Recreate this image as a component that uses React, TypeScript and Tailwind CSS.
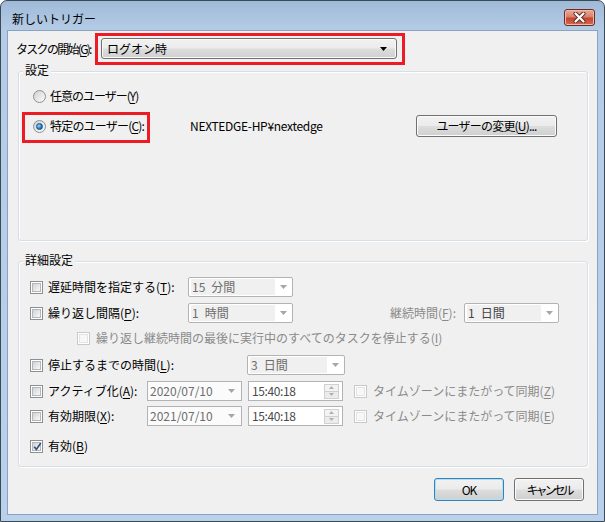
import React from "react";

const BTN_BG =
  "bg-[linear-gradient(to_bottom,#f2f2f2_0%,#ebebeb_48%,#dddddd_52%,#cfcfcf_100%)]";
const GRAY = "text-[#8a8a8a]";

function Key({ children }: { children: React.ReactNode }) {
  return <span className="underline decoration-1 underline-offset-2">{children}</span>;
}

function Arrow({ color = "#000", w = 7, h = 4 }: { color?: string; w?: number; h?: number }) {
  return (
    <svg width={w} height={h} viewBox={`0 0 ${w} ${h}`} aria-hidden>
      <polygon points={`0,0 ${w},0 ${w / 2},${h}`} fill={color} />
    </svg>
  );
}

function CheckBox({ checked = false, disabled = false }: { checked?: boolean; disabled?: boolean }) {
  return (
    <span
      className={`relative flex h-[13px] w-[13px] shrink-0 items-center justify-center border bg-white ${
        disabled ? "border-[#c9c9c9]" : "border-[#8e8f8f]"
      }`}
    >
      <span
        className={`h-[9px] w-[9px] border ${
          disabled
            ? "border-[#e4e4e4] bg-[#f7f7f7]"
            : "border-[#b3b7bc] bg-[linear-gradient(135deg,#cfd2d6,#f9f9f9)]"
        }`}
      />
      {checked && (
        <svg className="absolute left-[1px] top-[0px]" width="11" height="11" viewBox="0 0 11 11" aria-hidden>
          <path d="M2.2 5.8 L4.4 8.4 L8.8 2" fill="none" stroke="#3a4f83" strokeWidth="1.7" />
        </svg>
      )}
    </span>
  );
}

function Radio({ checked = false }: { checked?: boolean }) {
  return (
    <span className="flex h-[13px] w-[13px] shrink-0 items-center justify-center rounded-full border border-[#8e8f8f] bg-[linear-gradient(135deg,#cdd0d4,#fdfdfd)]">
      {checked && (
        <span className="h-[7px] w-[7px] rounded-full border border-[#1d4d84] bg-[radial-gradient(circle_at_35%_35%,#9ad6ff,#2b80cf_55%,#0d3e78)]" />
      )}
    </span>
  );
}

function PushButton({
  children,
  className = "",
  isDefault = false,
}: {
  children: React.ReactNode;
  className?: string;
  isDefault?: boolean;
}) {
  return (
    <div
      className={`flex items-center justify-center rounded-[3px] border ${
        isDefault
          ? "border-[#3c7fb1] shadow-[inset_0_0_0_1px_#a9e1f8]"
          : "border-[#707070] shadow-[inset_0_0_0_1px_#fbfbfb]"
      } ${BTN_BG} ${className}`}
    >
      {children}
    </div>
  );
}

function DisabledCombo({ value, className = "", tone = "text-[#6d6d6d]" }: { value: string; className?: string; tone?: string }) {
  return (
    <div className={`flex h-[20px] items-center rounded-[2px] border border-[#b3b3b3] bg-white ${className}`}>
      <span className={`ml-[2px] flex h-[16px] flex-1 items-center bg-[#f0f0f0] pl-[1px] ${tone}`}>{value}</span>
      <span className="flex w-[17px] justify-center">
        <Arrow color="#a6a6a6" />
      </span>
    </div>
  );
}

function DateBox({ value }: { value: string }) {
  return (
    <div className="flex h-[20px] w-[95px] items-center border border-[#b3b3b3] bg-[#fbfbfb] pl-[2px] text-[#6d6d6d]">
      <span className="flex-1">{value}</span>
      <span className="mr-[6px] flex">
        <Arrow color="#a6a6a6" />
      </span>
    </div>
  );
}

function TimeBox({ value }: { value: string }) {
  return (
    <div className="flex h-[20px] w-[95px] items-center border border-[#b3b3b3] bg-white pl-[3px] tracking-[-0.4px] text-[#4a4a4a]">
      <span className="flex-1">{value}</span>
      <span className="mr-[3px] flex h-[15px] w-[15px] flex-col">
        <span className="flex flex-1 items-center justify-center border border-[#d0d0d0] bg-[#f3f3f3]">
          <svg width="5" height="3" viewBox="0 0 5 3" aria-hidden>
            <polygon points="0,3 5,3 2.5,0" fill="#b0b0b0" />
          </svg>
        </span>
        <span className="flex flex-1 items-center justify-center border border-t-0 border-[#d0d0d0] bg-[#ececec]">
          <svg width="5" height="3" viewBox="0 0 5 3" aria-hidden>
            <polygon points="0,0 5,0 2.5,3" fill="#b0b0b0" />
          </svg>
        </span>
      </span>
    </div>
  );
}

function GroupBox({ title, className = "", children }: { title: string; className?: string; children: React.ReactNode }) {
  return (
    <div
      className={`relative ml-[10px] w-[570px] rounded-[3px] border border-[#d5dfe5] shadow-[inset_1px_1px_0_#ffffff,1px_1px_0_#ffffff] ${className}`}
    >
      <span className="absolute -top-[8px] left-[4px] bg-[#f0f0f0] px-[2px]">{title}</span>
      {children}
    </div>
  );
}

export default function App() {
  return (
    <div className="h-[522px] w-[605px] bg-white font-['Noto_Sans_CJK_JP',sans-serif] text-[12px] leading-none text-black">
      <div className="flex h-full w-full flex-col rounded-t-[7px] border border-[#3c4a58] bg-[linear-gradient(to_bottom,#9fbad8_0px,#b5cce6_30px,#b9d1ea_100%)]">
        {/* title bar */}
        <div className="flex h-[29px] shrink-0 items-start justify-between pl-[11px] pr-[9px]">
          <span className="mt-[12px]">新しいトリガー</span>
          <div className="mt-[8px] flex h-[17px] w-[31px] items-center justify-center rounded-[3px] border border-[#6e2b23] bg-[linear-gradient(to_bottom,#e9ab9a_0%,#d9806c_45%,#c5452f_55%,#d16b52_100%)] shadow-[inset_0_0_0_1px_#f0b8a8]">
            <svg width="13" height="11" viewBox="0 0 13 11" aria-hidden>
              <path d="M2.5 1.5 L10.5 9.5 M10.5 1.5 L2.5 9.5" stroke="#5a2a24" strokeWidth="4" strokeLinecap="round" />
              <path d="M2.5 1.5 L10.5 9.5 M10.5 1.5 L2.5 9.5" stroke="#ffffff" strokeWidth="2.2" strokeLinecap="round" />
            </svg>
          </div>
        </div>

        {/* client area */}
        <div className="mx-[6px] mb-[6px] flex flex-1 flex-col border border-[#8aa3c0] bg-[#f0f0f0]">
          <div className="ml-[8px] mt-[7px] flex h-[21px] items-center">
            <span className="w-[85px] tracking-[-1.7px]">
              タスクの開始(<Key>G</Key>):
            </span>
            <div className="relative h-[21px] w-[296px]">
              <div className={`flex h-full items-center justify-between rounded-[3px] border border-[#707070] pl-[5px] pr-[9px] shadow-[inset_0_0_0_1px_#fafafa] ${BTN_BG}`}>
                <span>ログオン時</span>
                <Arrow />
              </div>
              <div className="absolute -left-[6px] -top-[5px] h-[32px] w-[310px] border-[3px] border-[#ed1c24]" />
            </div>
          </div>

          <GroupBox title="設定" className="mt-[12px] h-[170px]">
            <div className="ml-[14px] mt-[16px] flex h-[16px] items-center gap-[4px]">
              <Radio />
              <span className="tracking-[-1px]">
                任意のユーザー(<Key>Y</Key>)
              </span>
            </div>
            <div className="ml-[14px] mt-[11px] flex h-[22px] items-center">
              <div className="relative flex h-full w-[157px] items-center gap-[4px]">
                <Radio checked />
                <span className="tracking-[-0.8px]">
                  特定のユーザー(<Key>C</Key>):
                </span>
                <div className="absolute -left-[11px] -top-[3px] h-[31px] w-[128px] border-[3px] border-[#ed1c24]" />
              </div>
              <span className="w-[226px] tracking-[-0.3px]">NEXTEDGE-HP¥nextedge</span>
              <PushButton className="h-[22px] w-[141px] tracking-[-0.8px]">
                ユーザーの変更(<Key>U</Key>)...
              </PushButton>
            </div>
          </GroupBox>

          <GroupBox title="詳細設定" className="mt-[20px] h-[206px]">
            <div className="ml-[11px] mt-[15px] flex h-[20px] items-center">
              <span className="flex w-[158px] items-center gap-[5px]">
                <CheckBox />
                <span>
                  遅延時間を指定する(<Key>T</Key>):
                </span>
              </span>
              <DisabledCombo value={"15\u2002分間"} className="w-[105px]" />
            </div>
            <div className="ml-[11px] mt-[6px] flex h-[20px] items-center">
              <span className="flex w-[158px] items-center gap-[5px]">
                <CheckBox />
                <span>
                  繰り返し間隔(<Key>P</Key>):
                </span>
              </span>
              <DisabledCombo value={"1\u2002時間"} className="w-[105px]" />
              <span className={`w-[171px] pr-[8px] text-right ${GRAY}`}>
                継続時間(<Key>F</Key>):
              </span>
              <DisabledCombo value={"1\u2002日間"} className="w-[95px]" tone="text-[#444444]" />
            </div>
            <div className="ml-[58px] mt-[7px] flex h-[16px] items-center gap-[6px]">
              <CheckBox disabled />
              <span className={GRAY}>
                繰り返し継続時間の最後に実行中のすべてのタスクを停止する(<Key>I</Key>)
              </span>
            </div>
            <div className="ml-[11px] mt-[9px] flex h-[20px] items-center">
              <span className="flex w-[217px] items-center gap-[5px]">
                <CheckBox />
                <span>
                  停止するまでの時間(<Key>L</Key>):
                </span>
              </span>
              <DisabledCombo value={"3\u2002日間"} className="w-[98px]" />
            </div>
            <div className="ml-[11px] mt-[6px] flex h-[20px] items-center">
              <span className="flex w-[117px] items-center gap-[5px]">
                <CheckBox />
                <span>
                  アクティブ化(<Key>A</Key>):
                </span>
              </span>
              <DateBox value="2020/07/10" />
              <span className="ml-[6px]">
                <TimeBox value="15:40:18" />
              </span>
              <span className="ml-[11px]">
                <CheckBox disabled />
              </span>
              <span className={`ml-[6px] ${GRAY}`}>
                タイムゾーンにまたがって同期(<Key>Z</Key>)
              </span>
            </div>
            <div className="ml-[11px] mt-[5px] flex h-[20px] items-center">
              <span className="flex w-[117px] items-center gap-[5px]">
                <CheckBox />
                <span>
                  有効期限(<Key>X</Key>):
                </span>
              </span>
              <DateBox value="2021/07/10" />
              <span className="ml-[6px]">
                <TimeBox value="15:40:18" />
              </span>
              <span className="ml-[11px]">
                <CheckBox disabled />
              </span>
              <span className={`ml-[6px] ${GRAY}`}>
                タイムゾーンにまたがって同期(<Key>E</Key>)
              </span>
            </div>
            <div className="ml-[11px] mt-[12px] flex h-[16px] items-center gap-[5px]">
              <CheckBox checked />
              <span>
                有効(<Key>B</Key>)
              </span>
            </div>
          </GroupBox>

          <div className="mt-[11px] flex justify-end gap-[10px] pr-[13px]">
            <PushButton isDefault className="h-[23px] w-[70px] tracking-[-1px]">
              OK
            </PushButton>
            <PushButton className="h-[23px] w-[70px] tracking-[-3px]">キャンセル</PushButton>
          </div>
        </div>
      </div>
    </div>
  );
}
